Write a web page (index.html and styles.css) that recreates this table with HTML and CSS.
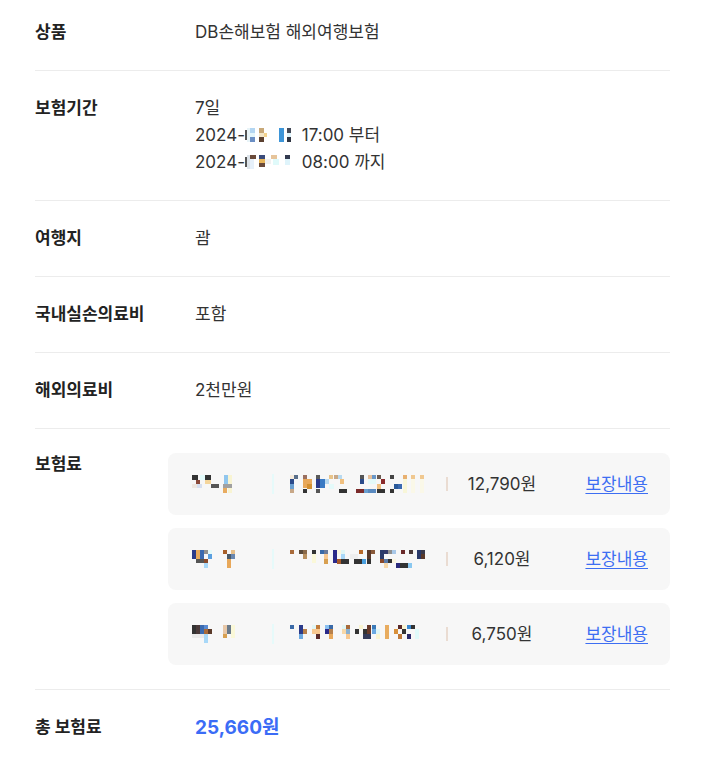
FILE: index.html
```html
<!DOCTYPE html>
<html lang="ko">
<head>
<meta charset="utf-8">
<link rel="stylesheet" href="styles.css">
</head>
<body>
<div class="sheet">
  <div class="row first">
    <div class="label">상품</div>
    <div class="value">DB손해보험 해외여행보험</div>
  </div>
  <div class="row">
    <div class="label">보험기간</div>
    <div class="value">
      <div>7일</div>
      <div>2024-<svg class="mos" width="52" height="18" viewBox="0 0 52 18"><rect x="0" y="4" width="2" height="10" fill="#555"/><rect x="2" y="2" width="3" height="14" fill="#e8f4f8"/><rect x="5" y="2" width="5" height="5" fill="#b3d6f2"/><rect x="5" y="7" width="5" height="4" fill="#e4f6fb"/><rect x="5" y="11" width="5" height="5" fill="#6b8fc4"/><rect x="14" y="2" width="5" height="5" fill="#c8a878"/><rect x="14" y="7" width="5" height="4" fill="#f3e6c8"/><rect x="14" y="11" width="5" height="5" fill="#5b4030"/><rect x="19" y="7" width="3" height="4" fill="#f3d28e"/><rect x="34" y="2" width="5" height="14" fill="#3d95d8"/><rect x="42" y="2" width="4" height="5" fill="#444a58"/><rect x="42" y="7" width="4" height="4" fill="#dff4fb"/><rect x="42" y="11" width="4" height="5" fill="#2f3542"/></svg> 17:00 부터</div>
      <div>2024-<svg class="mos" width="52" height="18" viewBox="0 0 52 18"><rect x="0" y="4" width="2" height="10" fill="#555"/><rect x="2" y="2" width="3" height="14" fill="#dde4ea"/><rect x="5" y="2" width="6" height="4" fill="#6a4a3a"/><rect x="5" y="6" width="4" height="10" fill="#e6f0fa"/><rect x="14" y="2" width="6" height="4" fill="#3a4b7a"/><rect x="14" y="6" width="6" height="4" fill="#e8b65a"/><rect x="14" y="10" width="6" height="4" fill="#6a4a3a"/><rect x="20" y="6" width="6" height="5" fill="#f1f1f1"/><rect x="26" y="2" width="6" height="4" fill="#e6c49a"/><rect x="28" y="6" width="6" height="6" fill="#e0fafa"/><rect x="40" y="2" width="5" height="4" fill="#333b50"/><rect x="40" y="6" width="5" height="6" fill="#dff4fb"/></svg> 08:00 까지</div>
    </div>
  </div>
  <div class="row">
    <div class="label">여행지</div>
    <div class="value">괌</div>
  </div>
  <div class="row">
    <div class="label">국내실손의료비</div>
    <div class="value">포함</div>
  </div>
  <div class="row">
    <div class="label">해외의료비</div>
    <div class="value">2천만원</div>
  </div>
  <div class="row premium">
    <div class="label">보험료</div>
    <div class="cards">
      <div class="card">
        <div class="name"><svg width="48" height="18" viewBox="0 0 48 18"><rect x="0" y="0" width="6" height="5" fill="#333"/><rect x="4" y="5" width="4" height="4" fill="#8b4a3a"/><rect x="0" y="9" width="5" height="4" fill="#eee7e0"/><rect x="5" y="9" width="5" height="4" fill="#d6dff0"/><rect x="8" y="0" width="5" height="5" fill="#e2fbfb"/><rect x="13" y="0" width="6" height="5" fill="#333"/><rect x="13" y="5" width="6" height="4" fill="#f5d69c"/><rect x="19" y="9" width="8" height="4" fill="#555"/><rect x="32" y="0" width="4" height="9" fill="#90c6ee"/><rect x="36" y="0" width="4" height="9" fill="#f8f4d2"/><rect x="31" y="9" width="9" height="4" fill="#a0a0a0"/><rect x="31" y="13" width="4" height="5" fill="#e8ac60"/><rect x="36" y="13" width="4" height="5" fill="#f8f4d2"/></svg></div>
        <span class="faint"></span>
        <div class="mosaic"><svg width="140" height="18" viewBox="0 0 140 18"><rect x="0" y="0" width="4" height="4" fill="#f7ecdc"/><rect x="4" y="0" width="4" height="4" fill="#5a6f8a"/><rect x="0" y="4" width="4" height="5" fill="#2b4a8a"/><rect x="0" y="9" width="4" height="5" fill="#6a9fd0"/><rect x="0" y="14" width="4" height="4" fill="#c8a888"/><rect x="13" y="0" width="4" height="4" fill="#9b7060"/><rect x="13" y="4" width="9" height="9" fill="#e8a85a"/><rect x="17" y="9" width="5" height="5" fill="#d49030"/><rect x="13" y="14" width="4" height="4" fill="#333"/><rect x="26" y="0" width="4" height="4" fill="#5a5a5a"/><rect x="26" y="4" width="4" height="9" fill="#2a3a8a"/><rect x="30" y="4" width="5" height="9" fill="#3a7ac4"/><rect x="35" y="4" width="4" height="5" fill="#b8daf0"/><rect x="26" y="14" width="4" height="4" fill="#555"/><rect x="39" y="9" width="5" height="5" fill="#e4fafa"/><rect x="39" y="0" width="4" height="4" fill="#e8c48a"/><rect x="44" y="0" width="4" height="4" fill="#c8a888"/><rect x="48" y="0" width="4" height="4" fill="#b8daf0"/><rect x="50" y="4" width="4" height="5" fill="#f0c080"/><rect x="49" y="14" width="8" height="4" fill="#333"/><rect x="70" y="0" width="4" height="4" fill="#555"/><rect x="70" y="4" width="4" height="5" fill="#2a4a8a"/><rect x="66" y="14" width="8" height="4" fill="#7a2a2a"/><rect x="74" y="14" width="4" height="4" fill="#6aa0d0"/><rect x="78" y="0" width="4" height="4" fill="#e8c09a"/><rect x="82" y="0" width="4" height="4" fill="#6a98c8"/><rect x="78" y="4" width="8" height="5" fill="#e4fafa"/><rect x="78" y="14" width="8" height="4" fill="#5a8ac0"/><rect x="87" y="0" width="4" height="4" fill="#6a5a50"/><rect x="91" y="4" width="4" height="5" fill="#8a2a2a"/><rect x="87" y="9" width="4" height="5" fill="#f0c080"/><rect x="87" y="14" width="8" height="4" fill="#333"/><rect x="100" y="0" width="4" height="4" fill="#444"/><rect x="104" y="9" width="4" height="5" fill="#2a5a9a"/><rect x="108" y="9" width="4" height="5" fill="#3a6ab0"/><rect x="100" y="14" width="4" height="4" fill="#333"/><rect x="113" y="0" width="4" height="4" fill="#e8b070"/><rect x="113" y="4" width="4" height="14" fill="#f8f6d8"/><rect x="121" y="0" width="4" height="4" fill="#f0c890"/><rect x="121" y="4" width="4" height="14" fill="#faf8e8"/><rect x="130" y="0" width="4" height="4" fill="#f0c890"/><rect x="130" y="4" width="4" height="14" fill="#faf8e8"/></svg></div>
        <span class="sep"></span>
        <div class="price">12,790원</div>
        <a class="link" href="#">보장내용</a>
      </div>
      <div class="card">
        <div class="name"><svg width="48" height="18" viewBox="0 0 48 18"><rect x="0" y="0" width="4" height="9" fill="#2a3a8a"/><rect x="4" y="0" width="4" height="9" fill="#e8a85a"/><rect x="8" y="0" width="4" height="9" fill="#3a6ab0"/><rect x="12" y="0" width="4" height="4" fill="#909090"/><rect x="16" y="0" width="4" height="4" fill="#e4fafa"/><rect x="16" y="4" width="4" height="5" fill="#5aa0e0"/><rect x="4" y="9" width="8" height="4" fill="#555"/><rect x="12" y="9" width="4" height="4" fill="#8a4a2a"/><rect x="12" y="13" width="4" height="5" fill="#a8d8f8"/><rect x="31" y="0" width="4" height="4" fill="#a8602a"/><rect x="39" y="0" width="4" height="4" fill="#e8c08a"/><rect x="35" y="4" width="4" height="5" fill="#4a5a6a"/><rect x="39" y="4" width="4" height="5" fill="#6a88b0"/><rect x="35" y="9" width="4" height="9" fill="#e8a85a"/></svg></div>
        <span class="faint"></span>
        <div class="mosaic"><svg width="140" height="18" viewBox="0 0 140 18"><rect x="0" y="0" width="4" height="4" fill="#a86a3a"/><rect x="9" y="0" width="4" height="4" fill="#5a4a3a"/><rect x="13" y="0" width="4" height="4" fill="#8a6a4a"/><rect x="13" y="4" width="4" height="5" fill="#b89060"/><rect x="22" y="0" width="4" height="4" fill="#333"/><rect x="22" y="4" width="4" height="9" fill="#faf8d8"/><rect x="30" y="0" width="4" height="4" fill="#3a6aa8"/><rect x="34" y="0" width="4" height="4" fill="#6a7a9a"/><rect x="34" y="4" width="4" height="5" fill="#f8c890"/><rect x="34" y="9" width="4" height="5" fill="#d8a050"/><rect x="43" y="0" width="4" height="13" fill="#2a2a8a"/><rect x="47" y="9" width="4" height="5" fill="#a85a2a"/><rect x="51" y="9" width="8" height="5" fill="#333"/><rect x="47" y="0" width="4" height="4" fill="#faf6e0"/><rect x="51" y="0" width="4" height="4" fill="#e0f6f6"/><rect x="51" y="4" width="4" height="5" fill="#a8d8f8"/><rect x="60" y="4" width="8" height="5" fill="#eee"/><rect x="64" y="9" width="8" height="5" fill="#333"/><rect x="72" y="9" width="4" height="5" fill="#4aa0e0"/><rect x="69" y="0" width="4" height="4" fill="#b86a2a"/><rect x="77" y="0" width="4" height="9" fill="#5a3a2a"/><rect x="81" y="0" width="4" height="4" fill="#8a5a3a"/><rect x="77" y="9" width="4" height="5" fill="#333"/><rect x="90" y="0" width="4" height="9" fill="#2a3a6a"/><rect x="94" y="0" width="4" height="4" fill="#333a6a"/><rect x="98" y="0" width="4" height="4" fill="#909090"/><rect x="102" y="0" width="4" height="4" fill="#a8c8e8"/><rect x="90" y="9" width="4" height="4" fill="#8a4a2a"/><rect x="94" y="9" width="4" height="4" fill="#5a7aa8"/><rect x="98" y="9" width="4" height="4" fill="#333"/><rect x="102" y="9" width="4" height="4" fill="#faf6e0"/><rect x="94" y="13" width="4" height="5" fill="#f8d8a8"/><rect x="106" y="13" width="4" height="5" fill="#2a2a7a"/><rect x="110" y="13" width="8" height="5" fill="#333"/><rect x="118" y="13" width="4" height="5" fill="#8ac8f0"/><rect x="111" y="0" width="4" height="4" fill="#6a2a2a"/><rect x="119" y="0" width="4" height="4" fill="#4a3a3a"/><rect x="127" y="0" width="4" height="9" fill="#2a3a6a"/><rect x="131" y="0" width="4" height="9" fill="#3a3a4a"/><rect x="131" y="4" width="4" height="5" fill="#5a3a2a"/></svg></div>
        <span class="sep"></span>
        <div class="price">6,120원</div>
        <a class="link" href="#">보장내용</a>
      </div>
      <div class="card">
        <div class="name"><svg width="48" height="18" viewBox="0 0 48 18"><rect x="0" y="0" width="4" height="9" fill="#333"/><rect x="4" y="0" width="4" height="9" fill="#4a3a3a"/><rect x="8" y="0" width="4" height="9" fill="#3a6ab0"/><rect x="12" y="0" width="4" height="4" fill="#5a8ad0"/><rect x="12" y="4" width="4" height="5" fill="#a86a3a"/><rect x="16" y="4" width="4" height="5" fill="#5a3a2a"/><rect x="0" y="9" width="12" height="4" fill="#eaeaea"/><rect x="12" y="9" width="4" height="9" fill="#a8d8f8"/><rect x="31" y="0" width="4" height="9" fill="#e8c8a8"/><rect x="35" y="0" width="4" height="9" fill="#6a7a8a"/><rect x="39" y="0" width="4" height="13" fill="#faf8d8"/><rect x="31" y="9" width="4" height="4" fill="#d8a050"/></svg></div>
        <span class="faint"></span>
        <div class="mosaic"><svg width="140" height="18" viewBox="0 0 140 18"><rect x="0" y="0" width="4" height="4" fill="#3a6aa8"/><rect x="9" y="0" width="4" height="9" fill="#2a3a8a"/><rect x="13" y="4" width="4" height="5" fill="#b8804a"/><rect x="9" y="9" width="4" height="5" fill="#6aa8e0"/><rect x="22" y="0" width="4" height="4" fill="#e0f6f6"/><rect x="26" y="0" width="4" height="4" fill="#c07a3a"/><rect x="22" y="4" width="8" height="5" fill="#f8c890"/><rect x="26" y="9" width="4" height="5" fill="#5a2a2a"/><rect x="35" y="0" width="4" height="4" fill="#8ac0f0"/><rect x="39" y="0" width="4" height="4" fill="#3a6aa8"/><rect x="35" y="4" width="4" height="5" fill="#2a2a8a"/><rect x="39" y="4" width="4" height="5" fill="#b8804a"/><rect x="39" y="9" width="4" height="5" fill="#e8a85a"/><rect x="52" y="0" width="4" height="4" fill="#e0f6f6"/><rect x="56" y="0" width="4" height="4" fill="#a86a3a"/><rect x="52" y="4" width="4" height="5" fill="#f8d8a8"/><rect x="56" y="4" width="4" height="5" fill="#8ab0d0"/><rect x="56" y="9" width="4" height="5" fill="#f8c890"/><rect x="65" y="4" width="4" height="5" fill="#333"/><rect x="69" y="0" width="4" height="4" fill="#faf4d0"/><rect x="73" y="4" width="4" height="5" fill="#333"/><rect x="77" y="0" width="4" height="9" fill="#6a3a2a"/><rect x="73" y="9" width="8" height="5" fill="#333a5a"/><rect x="82" y="0" width="4" height="4" fill="#3a7ab8"/><rect x="82" y="4" width="4" height="5" fill="#6aa8e0"/><rect x="86" y="4" width="4" height="5" fill="#e0f6f6"/><rect x="86" y="9" width="4" height="5" fill="#faf4d0"/><rect x="95" y="0" width="4" height="14" fill="#e8ac60"/><rect x="104" y="4" width="4" height="5" fill="#d8903a"/><rect x="108" y="0" width="4" height="4" fill="#5a2a2a"/><rect x="108" y="9" width="4" height="5" fill="#c07a3a"/><rect x="112" y="0" width="4" height="4" fill="#faf4d0"/><rect x="112" y="4" width="4" height="5" fill="#333"/><rect x="117" y="0" width="4" height="4" fill="#3a8ad0"/><rect x="121" y="0" width="4" height="4" fill="#333"/><rect x="117" y="9" width="4" height="5" fill="#2a2a6a"/><rect x="125" y="4" width="4" height="10" fill="#e0fafa"/></svg></div>
        <span class="sep"></span>
        <div class="price">6,750원</div>
        <a class="link" href="#">보장내용</a>
      </div>
    </div>
  </div>
  <div class="row total">
    <div class="label">총 보험료</div>
    <div class="value amount">25,660원</div>
  </div>
</div>
</body>
</html>
```

FILE: styles.css
```css
* { box-sizing: border-box; }
html, body { margin: 0; padding: 0; background: #fff; }
body {
  font-family: Inter, "Noto Sans CJK KR", "Noto Sans", sans-serif;
  font-size: 17px;
  color: #333;
}
.sheet {
  width: 635px;
  margin-left: 35px;
}
.row {
  display: grid;
  grid-template-columns: 160px 1fr;
  padding: 24px 0;
  border-bottom: 1px solid #ececec;
  line-height: 27px;
}
.row.first { padding-top: 19px; }
.row.total { border-bottom: none; }
.label {
  font-weight: 700;
  color: #222;
  line-height: 27px;
}
.premium .label { line-height: 22px; }
.value { color: #333; }
.mos { vertical-align: -3px; }
.cards {
  margin-left: -27px;
  display: flex;
  flex-direction: column;
  gap: 13px;
}
.card {
  height: 62px;
  background: #f7f7f7;
  border-radius: 8px;
  display: flex;
  align-items: center;
  padding: 0 22px 0 24px;
}
.name { width: 80px; height: 18px; display: flex; }
.faint { width: 2px; height: 20px; background: #e6fafa; }
.mosaic { margin-left: 16px; width: 140px; height: 18px; display: flex; }
.sep { margin-left: 16px; width: 2px; height: 14px; background: #eadcd2; }
.price {
  width: 108px;
  text-align: center;
  font-size: 17px;
  color: #333;
}
.link {
  margin-left: auto;
  color: #3d6ef2;
  font-size: 17px;
  text-decoration: underline;
  text-underline-offset: 3px;
}
.amount {
  color: #3b6cf6;
  font-weight: 700;
  font-size: 19px;
}
```
